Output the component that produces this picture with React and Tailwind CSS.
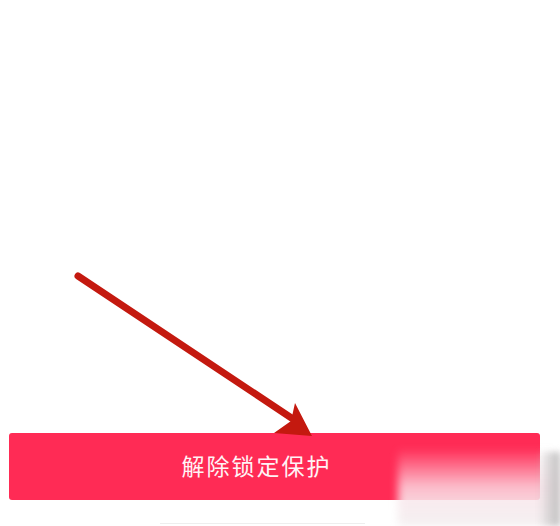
import React from "react";

export default function App() {
  return (
    <div className="relative w-[560px] h-[526px] bg-white overflow-hidden">
      <div className="h-[433px]" />
      <div className="px-[9px] pr-[20px]">
        <div className="h-[67px] rounded-[3px] bg-[#ff2b55] flex items-center justify-center pr-[38px]">
          <span
            className="text-[23px] tracking-[2px] text-[#fff3f5] pl-[2px] -mt-[2px]"
            style={{ fontFamily: '"Noto Sans CJK SC", "Noto Sans", sans-serif' }}
          >
            解除锁定保护
          </span>
        </div>
      </div>
      <div className="mt-[23px] ml-[160px] w-[205px] h-px bg-[#eeeeee]" />

      <svg
        className="absolute left-0 top-0 pointer-events-none"
        width="560"
        height="526"
        viewBox="0 0 560 526"
      >
        <line
          x1="78"
          y1="276"
          x2="296"
          y2="421"
          stroke="#c4190f"
          strokeWidth="7"
          strokeLinecap="round"
        />
        <polygon points="295,403 312,436 274,433 291,421" fill="#c4190f" />
      </svg>

      <div className="absolute left-[398px] top-[448px] w-[162px] h-[78px] pointer-events-none bg-gradient-to-b from-[#ff2b55]/0 via-[#fbe3ea]/80 to-[#f4f0f1] blur-[4px]" />
      <div className="absolute left-[538px] top-[452px] w-[22px] h-[74px] pointer-events-none bg-gradient-to-r from-white/0 to-[#bdbdbd] blur-[3px]" />
    </div>
  );
}
